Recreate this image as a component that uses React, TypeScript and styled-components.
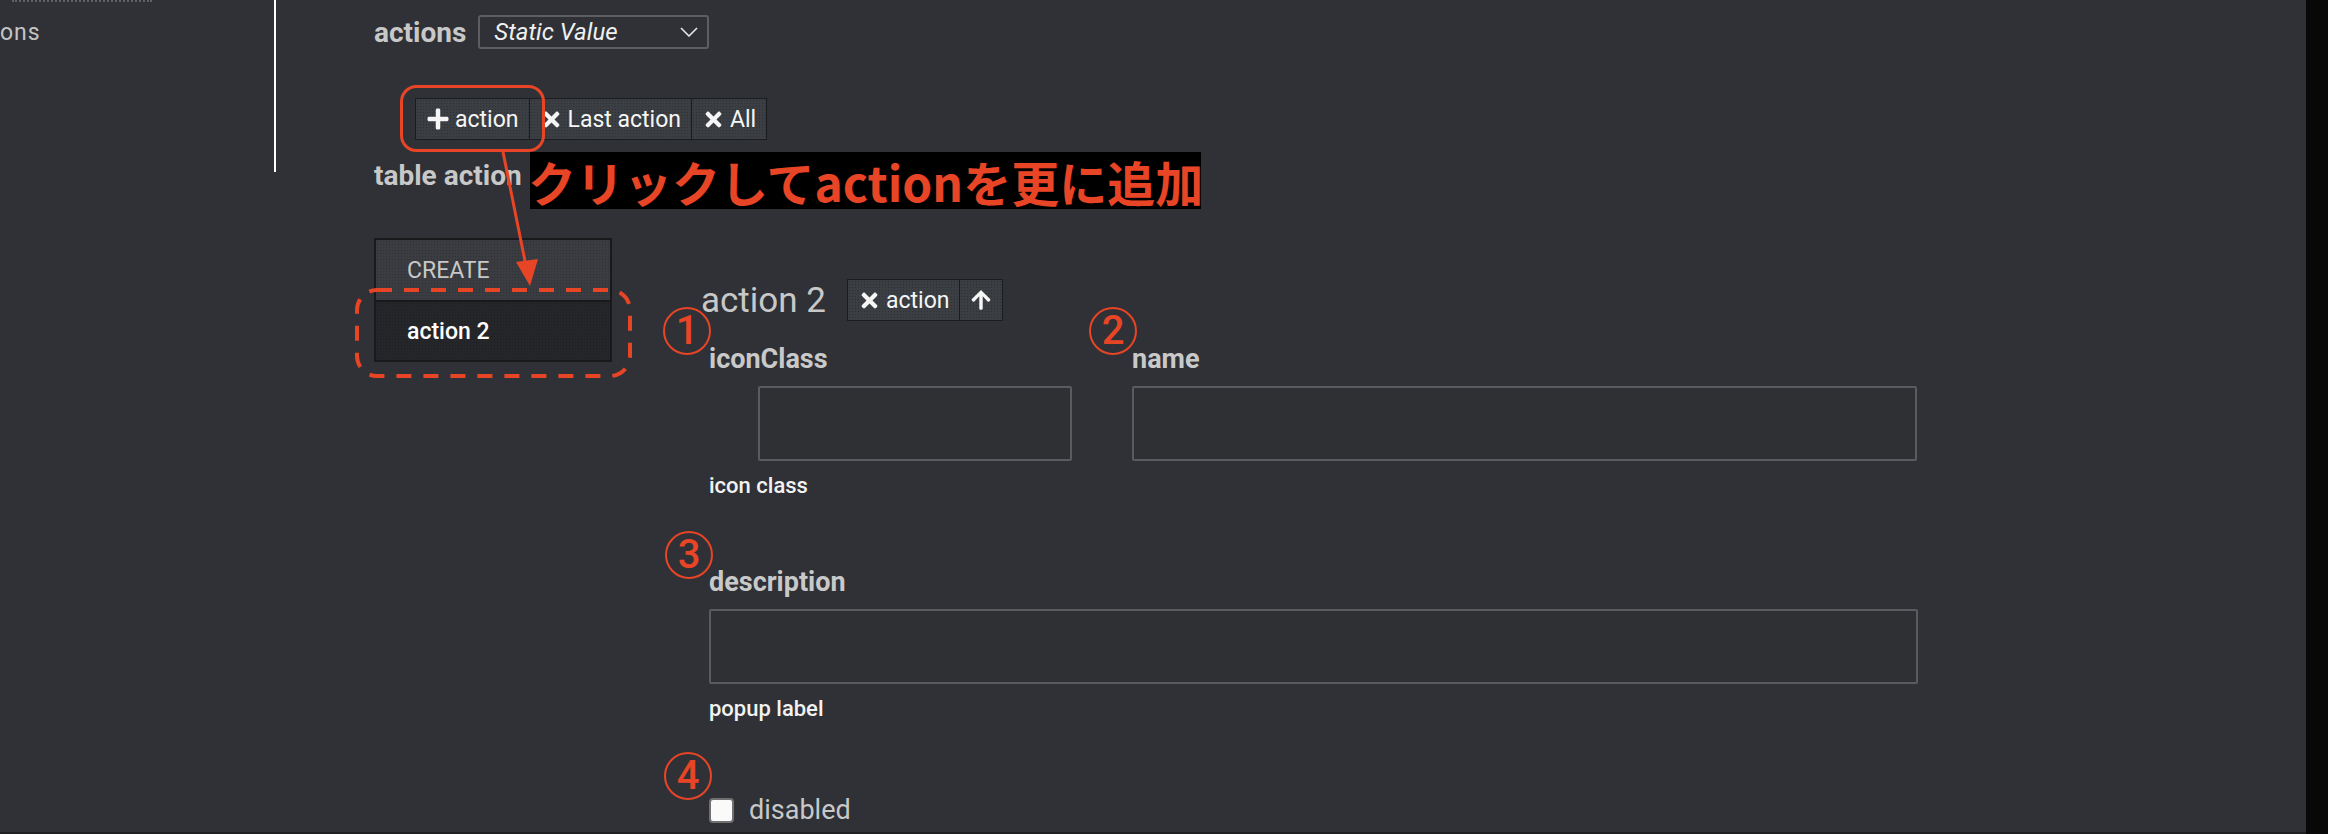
import React from 'react';
import styled, { createGlobalStyle } from 'styled-components';
import { FaPlus, FaTimes, FaArrowUp } from 'react-icons/fa';

const RED = '#e84526';

const GlobalStyle = createGlobalStyle`
  html, body { margin: 0; padding: 0; background: #2f3136; overflow: hidden; }
  body { font-family: Roboto, "Noto Sans", sans-serif; }
  * { box-sizing: border-box; }
`;

const Page = styled.div`
  position: relative;
  display: flex;
  width: 2328px;
  height: 834px;
  overflow: hidden;
`;

const Workspace = styled.div`
  flex: 1;
  display: flex;
  align-items: flex-start;
  background: #2f3136;
  border-bottom: 2px solid #1f2022;
`;

const ScrollEdge = styled.div`
  width: 22px;
  background: #080808;
`;

const Sidebar = styled.aside`
  flex-shrink: 0;
  width: 276px;
  height: 172px;
  border-right: 2px solid #ffffff;
`;

const SidebarCut = styled.div`
  margin-left: 12px;
  width: 140px;
  border-top: 2px dotted #5f6166;
`;

const SidebarItem = styled.div`
  margin-top: 17px;
  font-size: 23px;
  line-height: 27px;
  letter-spacing: 1px;
  color: #c4c4c4;
`;

const Main = styled.main`
  display: flex;
  flex-direction: column;
  align-items: flex-start;
  padding: 15px 0 0 98px;
`;

const ActionsRow = styled.div`
  display: flex;
  align-items: center;
  gap: 12px;
  height: 34px;
`;

const SectionLabel = styled.div<{ $mt?: number }>`
  margin-top: ${p => p.$mt ?? 0}px;
  font-size: 28px;
  line-height: 33px;
  font-weight: 700;
  color: #c8c8c8;
  white-space: nowrap;
`;

const Select = styled.div`
  display: flex;
  align-items: center;
  justify-content: space-between;
  width: 231px;
  height: 34px;
  padding: 0 9px 0 14px;
  border: 2px solid #5c5e62;
  border-radius: 3px;
  font-size: 24px;
  font-style: italic;
  color: #f0f0f0;
`;

const ButtonGroup = styled.div<{ $mt?: number; $ml?: number }>`
  display: flex;
  margin-top: ${p => p.$mt ?? 0}px;
  margin-left: ${p => p.$ml ?? 0}px;
`;

const ToolButton = styled.button`
  display: flex;
  align-items: center;
  gap: 5px;
  height: 42px;
  padding: 0 10px 0 10px;
  margin: 0 0 0 -1px;
  background-color: #3b3e43;
  background-image: radial-gradient(rgba(0, 0, 0, 0.22) 0.6px, transparent 0.8px);
  background-size: 3px 3px;
  border: 1px solid #1b1c1f;
  color: #f6f6f6;
  font-family: Roboto, sans-serif;
  font-size: 23px;
  white-space: nowrap;
  svg { flex-shrink: 0; }
  &:first-child { margin-left: 0; }
`;

const Editor = styled.div`
  display: flex;
  align-items: flex-start;
  margin-top: 46px;
`;

const List = styled.div`
  width: 238px;
  border: 2px solid #18191b;
  display: flex;
  flex-direction: column;
`;

const ListItem = styled.div<{ $active?: boolean }>`
  display: flex;
  align-items: center;
  height: 60px;
  padding-left: 31px;
  font-size: 23px;
  font-weight: ${p => (p.$active ? 500 : 400)};
  color: ${p => (p.$active ? '#ffffff' : '#c8c8c8')};
  background-color: ${p => (p.$active ? '#25262a' : '#3a3c41')};
  background-image: radial-gradient(rgba(0, 0, 0, 0.18) 0.6px, transparent 0.8px);
  background-size: 3px 3px;
  & + & { border-top: 2px solid #18191b; }
`;

const Detail = styled.section`
  display: flex;
  flex-direction: column;
  margin: 41px 0 0 89px;
`;

const DetailHeader = styled.div`
  display: flex;
  align-items: center;
  gap: 21px;
  height: 42px;
`;

const Heading = styled.h2`
  margin: 0;
  font-size: 35px;
  font-weight: 400;
  color: #c8c8c8;
  white-space: nowrap;
`;

const Fields = styled.div`
  display: flex;
  flex-direction: column;
  margin: 22px 0 0 8px;
`;

const FieldRow = styled.div`
  display: flex;
  align-items: flex-start;
  gap: 60px;
`;

const Field = styled.div<{ $mt?: number }>`
  position: relative;
  display: flex;
  flex-direction: column;
  margin-top: ${p => p.$mt ?? 0}px;
`;

const FieldLabel = styled.label`
  font-size: 27px;
  line-height: 32px;
  font-weight: 700;
  color: #c9c9c9;
`;

const TextBox = styled.div<{ $w: number; $indent?: number }>`
  margin-top: 11px;
  margin-left: ${p => p.$indent ?? 0}px;
  width: ${p => p.$w}px;
  height: 75px;
  border: 2px solid #5a5b5f;
  border-radius: 2px;
  background: #2e3034;
`;

const Help = styled.div`
  margin-top: 12px;
  font-size: 22px;
  line-height: 26px;
  font-weight: 500;
  color: #f2f2f2;
`;

const CheckRow = styled.label`
  position: relative;
  display: flex;
  align-items: center;
  gap: 15px;
  height: 32px;
  margin-top: 72px;
  font-size: 27px;
  color: #c8c8c8;
`;

const Check = styled.input`
  appearance: none;
  margin: 0;
  width: 25px;
  height: 25px;
  border: 2px solid #707070;
  border-radius: 4px;
  background: #fafafa;
`;

const Badge = styled.span<{ $left: number; $top: number }>`
  position: absolute;
  left: ${p => p.$left}px;
  top: ${p => p.$top}px;
  display: flex;
  align-items: center;
  justify-content: center;
  width: 48px;
  height: 48px;
  border: 2px solid ${RED};
  border-radius: 50%;
  color: ${RED};
  font-size: 40px;
  font-weight: 500;
  line-height: 1;
`;

const Overlay = styled.svg`
  position: absolute;
  left: 0;
  top: 0;
  pointer-events: none;
`;

const Callout = styled.div`
  position: absolute;
  left: 530px;
  top: 152px;
  width: 671px;
  height: 57px;
  display: flex;
  align-items: center;
  justify-content: center;
  background: #000;
  color: ${RED};
  font-family: "Noto Sans CJK JP", sans-serif;
  font-weight: 700;
  font-size: 48px;
  white-space: nowrap;
`;

const Chevron = () => (
  <svg width="18" height="10" viewBox="0 0 18 10" fill="none">
    <polyline points="1,1 9,9 17,1" stroke="#e6e6e6" strokeWidth="1.6" />
  </svg>
);

export default function App() {
  return (
    <Page>
      <GlobalStyle />
      <Workspace>
        <Sidebar>
          <SidebarCut />
          <SidebarItem>ons</SidebarItem>
        </Sidebar>
        <Main>
          <ActionsRow>
            <SectionLabel>actions</SectionLabel>
            <Select>
              <span>Static Value</span>
              <Chevron />
            </Select>
          </ActionsRow>
          <ButtonGroup $mt={49} $ml={41}>
            <ToolButton><FaPlus size={24} />action</ToolButton>
            <ToolButton><FaTimes size={23} />Last action</ToolButton>
            <ToolButton><FaTimes size={23} />All</ToolButton>
          </ButtonGroup>
          <SectionLabel $mt={19}>table action</SectionLabel>
          <Editor>
            <List>
              <ListItem>CREATE</ListItem>
              <ListItem $active>action 2</ListItem>
            </List>
            <Detail>
              <DetailHeader>
                <Heading>action 2</Heading>
                <ButtonGroup>
                  <ToolButton><FaTimes size={23} />action</ToolButton>
                  <ToolButton><FaArrowUp size={22} /></ToolButton>
                </ButtonGroup>
              </DetailHeader>
              <Fields>
                <FieldRow>
                  <Field>
                    <Badge $left={-46} $top={-36}>1</Badge>
                    <FieldLabel>iconClass</FieldLabel>
                    <TextBox $w={314} $indent={49} />
                    <Help>icon class</Help>
                  </Field>
                  <Field>
                    <Badge $left={-43} $top={-36}>2</Badge>
                    <FieldLabel>name</FieldLabel>
                    <TextBox $w={785} />
                  </Field>
                </FieldRow>
                <Field $mt={67}>
                  <Badge $left={-44} $top={-35}>3</Badge>
                  <FieldLabel>description</FieldLabel>
                  <TextBox $w={1209} />
                  <Help>popup label</Help>
                </Field>
                <CheckRow>
                  <Badge $left={-45} $top={-42}>4</Badge>
                  <Check type="checkbox" />
                  <span>disabled</span>
                </CheckRow>
              </Fields>
            </Detail>
          </Editor>
        </Main>
      </Workspace>
      <ScrollEdge />
      <Overlay width="2328" height="834" viewBox="0 0 2328 834">
        <rect x="401.5" y="86.5" width="142" height="64" rx="15" fill="none" stroke={RED} strokeWidth="3" />
        <line x1="503" y1="152" x2="526" y2="266" stroke={RED} strokeWidth="3" />
        <polygon points="530,286 516,262 538,259" fill={RED} />
        <rect x="357" y="290" width="273" height="86" rx="20" fill="none" stroke={RED} strokeWidth="4" strokeDasharray="15 12" />
      </Overlay>
      <Callout>クリックしてactionを更に追加</Callout>
    </Page>
  );
}
